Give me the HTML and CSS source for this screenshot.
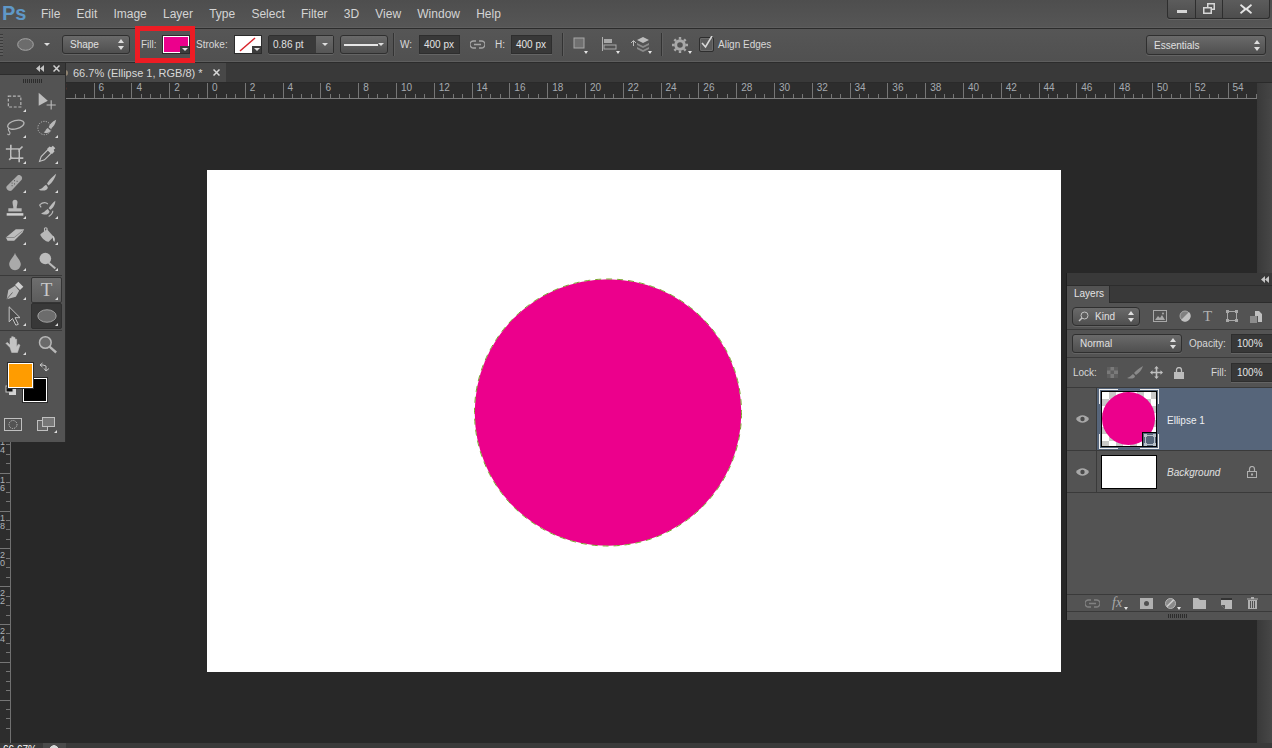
FILE: index.html
```html
<!DOCTYPE html>
<html lang="en">
<head>
<meta charset="utf-8">
<title>Photoshop</title>
<link rel="stylesheet" href="styles.css">
</head>
<body>
<div class="app">
  <header class="menubar">
    <div class="logo">Ps</div>
    <nav class="menu">
      <span>File</span><span>Edit</span><span>Image</span><span>Layer</span><span>Type</span><span>Select</span><span>Filter</span><span>3D</span><span>View</span><span>Window</span><span>Help</span>
    </nav>
    <div class="winctl">
      <div class="wbtn wmin"><i></i></div>
      <div class="wbtn wres"><svg width="14" height="12" viewBox="0 0 14 12"><path d="M5 0h8v7h-3v4H1V4h4zM6.500 1.500V4H10v1.500h1.500v-4zM2.500 5.500v4h6v-4z" fill="#d6d6d6" fill-rule="evenodd"/></svg></div>
      <div class="wbtn wclose"><svg width="12" height="10" viewBox="0 0 12 10"><path d="M1 0l5 4 5-4 1 1.500L8 5l4 3.500L11 10 6 6l-5 4-1-1.500L4 5 0 1.500z" fill="#e4e4e4"/></svg></div>
    </div>
  </header>

  <section class="options">
    <div class="opt-grip"></div>
    <svg class="o-ellipse" width="17" height="13" viewBox="0 0 17 13"><ellipse cx="8.500" cy="6.500" rx="7.800" ry="5.800" fill="#6c6c6c" stroke="#a8a8a8"/></svg>
    <i class="caret o-caret"></i>
    <div class="select o-shape"><span>Shape</span><i class="updown"></i></div>
    <div class="fillgroup">
      <span class="lbl l-fill">Fill:</span>
      <div class="swatch"><i class="swatch-corner"></i></div>
    </div>
    <span class="lbl o-stroke">Stroke:</span>
    <div class="swatch swatch-stroke">
      <svg width="26" height="17" viewBox="0 0 26 17"><path d="M5 15L20 2" stroke="#d8232a" stroke-width="1.500"/></svg>
      <i class="swatch-corner"></i>
    </div>
    <div class="combo o-pt"><span class="combo-val">0.86 pt</span><span class="combo-btn"><i class="caret"></i></span></div>
    <div class="select o-line"><b class="strokeline"></b><i class="caret"></i></div>
    <i class="vsep o-sep1"></i>
    <span class="lbl o-w">W:</span>
    <span class="field o-wv">400 px</span>
    <svg class="o-link" width="15" height="9" viewBox="0 0 15 9"><path d="M6 1H3.500a3.500 3.500 0 000 7H6M9 1h2.500a3.500 3.500 0 010 7H9M4 4.500h7" fill="none" stroke="#a6a6a6" stroke-width="1.300"/></svg>
    <span class="lbl o-h">H:</span>
    <span class="field o-hv">400 px</span>
    <i class="vsep o-sep2"></i>
    <div class="o-ic o-i1"><svg width="12" height="18" viewBox="0 0 12 18"><rect x="1" y="2" width="10" height="10" fill="#707070" stroke="#a8a8a8"/></svg><i class="tri"></i></div>
    <div class="o-ic o-i2"><svg width="17" height="18" viewBox="0 0 17 18"><path d="M1.500 1v14" stroke="#b0b0b0"/><rect x="3" y="3" width="8" height="4" fill="#a8a8a8"/><rect x="3" y="9" width="12" height="4" fill="none" stroke="#a8a8a8"/></svg><i class="tri"></i></div>
    <div class="o-ic o-i3"><svg width="20" height="18" viewBox="0 0 20 18"><path d="M1 7l2.500-2.500L6 7M3.500 5v5" fill="none" stroke="#bcbcbc"/><path d="M13 1l6 3-6 3-6-3z" fill="#bcbcbc"/><path d="M7 7l6 3 6-3v2l-6 3-6-3zM7 11l6 3 6-3v2l-6 3-6-3z" fill="#8a8a8a"/></svg><i class="tri"></i></div>
    <i class="vsep o-sep3"></i>
    <div class="o-ic o-gear"><svg width="16" height="16" viewBox="0 0 16 16"><circle cx="8" cy="8" r="4.300" fill="none" stroke="#a8a8a8" stroke-width="3"/><path d="M8 0v16M0 8h16M2.300 2.300l11.400 11.400M13.700 2.300L2.300 13.700" stroke="#a8a8a8" stroke-width="2.400" stroke-dasharray="2.600 10.800 2.600"/></svg><i class="tri"></i></div>
    <div class="check"><svg width="16" height="16" viewBox="0 0 16 16"><path d="M3 7l3.500 4L13 0" fill="none" stroke="#d8d8d8" stroke-width="1.600"/></svg></div>
    <span class="lbl o-align">Align Edges</span>
    <div class="select o-ess"><span>Essentials</span><i class="updown"></i></div>
  </section>

  <section class="tabbar">
    <div class="doctab"><span>66.7% (Ellipse 1, RGB/8) *</span><svg class="tabx" width="7" height="7" viewBox="0 0 7 7"><path d="M.5.5l6 6M6.500.5l-6 6" stroke="#d8d8d8" stroke-width="1.500"/></svg></div>
  </section>

  <section class="hruler">
    <div class="rticks">
      <span>8</span><span>6</span><span>4</span><span>2</span><span>0</span><span>2</span><span>4</span><span>6</span><span>8</span><span>10</span><span>12</span><span>14</span><span>16</span><span>18</span><span>20</span><span>22</span><span>24</span><span>26</span><span>28</span><span>30</span><span>32</span><span>34</span><span>36</span><span>38</span><span>40</span><span>42</span><span>44</span><span>46</span><span>48</span><span>50</span><span>52</span><span>54</span>
    </div>
    <div class="rcorner"></div>
  </section>

  <main class="work">
    <div class="vruler">
      <span>1<br>4</span><span>1<br>6</span><span>1<br>8</span><span>2<br>0</span><span>2<br>2</span><span>2<br>4</span><span></span><span></span>
    </div>
    <div class="stage">
      <div class="doc">
        <svg class="circle" width="268" height="269" viewBox="0 0 268 269"><circle cx="134" cy="134.500" r="133.300" fill="#ec008c"/><circle cx="134" cy="134.500" r="133.500" fill="none" stroke="#7aa52c" stroke-width="1" stroke-dasharray="6 5"/></svg>
      </div>
    </div>
    <div class="vscroll"></div>
  </main>

  <footer class="status"><span class="zoomv">66.67%</span><i class="status-cell"></i></footer>

  <aside class="toolbox">
    <div class="tb-head"><svg class="dbl" width="8" height="7" viewBox="0 0 8 7"><path d="M4 0v7L0 3.500zM8 0v7L4 3.500z" fill="#c4c4c4"/></svg><svg width="7" height="7" viewBox="0 0 7 7"><path d="M.5.500l6 6M6.500.500l-6 6" stroke="#d0d0d0" stroke-width="1.500"/></svg></div>
    <div class="grip"></div>
    <div class="tgroup">
      <div class="tool tri-on"><svg viewBox="0 0 24 24"><rect x="4" y="5" width="15" height="13" fill="none" stroke="#b8b8b8" stroke-width="1.400" stroke-dasharray="3.500 2"/></svg></div>
      <div class="tool"><svg viewBox="0 0 24 24"><path d="M2 1l11 9.500-11 6z" fill="#bdbdbd"/><path d="M17 10v11M11.500 15.500h11" stroke="#bdbdbd" stroke-width="1.300"/></svg></div>
      <div class="tool tri-on"><svg viewBox="0 0 24 24"><ellipse cx="13" cy="8" rx="10" ry="5" fill="none" stroke="#b5b5b5" stroke-width="1.600" transform="rotate(-15 13 8)"/><path d="M5 12c-3 3 1 4 1 6s-2 3-3 1" fill="none" stroke="#b5b5b5" stroke-width="1.300"/></svg></div>
      <div class="tool tri-on"><svg viewBox="0 0 24 24"><circle cx="9" cy="12" r="8" fill="none" stroke="#c4c4c4" stroke-dasharray="1.500 1.500"/><path d="M23 2c-5 2-8 6-9 9l2 2c4-2 6-6 7-11zM13 12c-3 1-2 4-5 5 3 2 8 1 8-2z" fill="#b8b8b8"/></svg></div>
      <div class="tool tri-on"><svg viewBox="0 0 24 24"><path d="M7 1v16h15M1 6h16v16M5 19L21 3" fill="none" stroke="#bdbdbd" stroke-width="2"/><rect x="8" y="7" width="8" height="9" fill="#5c5c5c"/></svg></div>
      <div class="tool tri-on"><svg viewBox="0 0 24 24"><path d="M3 21l2-6 8-8 4 4-8 8z" fill="#535353" stroke="#c4c4c4" stroke-width="1.300"/><path d="M12 6l3-3 2 1 2-2 3 3-2 2 1 2-3 3z" fill="#c0c0c0"/></svg></div>
    </div>
    <div class="tgroup">
      <div class="tool tri-on"><svg viewBox="0 0 24 24"><path d="M2 16L15 3c3-2 7 2 5 5L8 21c-3 2-8-2-6-5z" fill="#aaa"/><path d="M8 12h1M11 9h1M11 13h1M14 10h1M8 15h1" stroke="#555" stroke-width="1.500"/></svg></div>
      <div class="tool tri-on"><svg viewBox="0 0 24 24"><path d="M23 1c-4 3-9 8-11 12l2 2c4-3 8-9 9-14zM11 14c-3 1-3 4-9 6 5 2 11 1 11-3z" fill="#bbb"/></svg></div>
      <div class="tool tri-on"><svg viewBox="0 0 24 24"><path d="M9 4a3 3 0 016 0c0 3-1 4-1 7h6v4H4v-4h6c0-3-1-4-1-7z" fill="#b8b8b8"/><path d="M2 17h20v3H2z" fill="#d0d0d0"/></svg></div>
      <div class="tool tri-on"><svg viewBox="0 0 24 24"><path d="M22 2c-3 2-6 6-8 9l2 2c3-2 6-6 6-11zM13 12c-3 1-3 4-8 5 3 3 10 2 10-2z" fill="#bbb"/><path d="M3 7c4-3 8-3 10-1M3 7l2 3M3 7l3-2M19 14c0 3-2 5-5 7" fill="none" stroke="#bbb" stroke-width="1.300"/></svg></div>
      <div class="tool tri-on"><svg viewBox="0 0 24 24"><path d="M1 15L13 5h10l-2 4-10 10H3z" fill="#bdbdbd"/><path d="M1 15h10l10-8" fill="none" stroke="#808080"/></svg></div>
      <div class="tool tri-on"><svg viewBox="0 0 24 24"><path d="M4 11l8-6 8 9-6 6c-3 1-10-6-10-9z" fill="#b8b8b8"/><path d="M9 8V4a2 2 0 013 0v6" fill="none" stroke="#b8b8b8" stroke-width="1.300"/><path d="M19 13c2 1 3 4 2 7-2 0-2-4-2-7z" fill="#ccc"/></svg></div>
      <div class="tool tri-on"><svg viewBox="0 0 24 24"><path d="M12 2c1 5 7 9 7 14a7 7 0 01-14 0c0-5 6-9 7-14z" fill="#aaa"/></svg></div>
      <div class="tool tri-on"><svg viewBox="0 0 24 24"><circle cx="10" cy="9" r="7" fill="#bbb"/><path d="M14 14l8 7" stroke="#bbb" stroke-width="2.500"/></svg></div>
    </div>
    <div class="tgroup">
      <div class="tool tri-on"><svg viewBox="0 0 24 24"><path d="M2 23l2-11 8-5 5 6-4 7z" fill="#bbb"/><path d="M2 23l7-8" stroke="#555"/><path d="M12 6l4-4 6 6-4 4z" fill="#d0d0d0"/></svg></div>
      <div class="tool tool-on tri-on"><span class="t-glyph">T</span></div>
      <div class="tool tri-on"><svg viewBox="0 0 24 24"><path d="M5 1v18l4-4 4 8 3-1-4-8h6z" fill="#4a4a4a" stroke="#c4c4c4" stroke-width="1.200"/></svg></div>
      <div class="tool tool-dark tri-on"><svg viewBox="0 0 24 24"><ellipse cx="12" cy="12" rx="11" ry="7.500" fill="#6c6c6c" stroke="#b0b0b0"/></svg></div>
    </div>
    <div class="tgroup tgroup-last">
      <div class="tool tri-on"><svg viewBox="0 0 24 24"><path d="M6 15L1 10l2-1 3 3V4h2v6-8h2v8-7h2v7-5h2v9l2-3 2 1-3 9H8z" fill="#c4c4c4" stroke="#c4c4c4" stroke-width=".6"/></svg></div>
      <div class="tool"><svg viewBox="0 0 24 24"><circle cx="10" cy="9" r="7" fill="#6a6a6a" stroke="#b8b8b8" stroke-width="1.800"/><path d="M15 14l8 7" stroke="#b8b8b8" stroke-width="2.800"/></svg></div>
    </div>
    <div class="colors">
      <div class="cbg"></div>
      <div class="cfg"></div>
      <svg class="cswap" width="12" height="12" viewBox="0 0 12 12"><path d="M1 3h3l3 1v5M1 3l2.500-2M1 3l2.500 2M7 9l-2-2.500M7 9l3-2.500" fill="none" stroke="#c8c8c8"/></svg>
      <svg class="cdef" width="12" height="11" viewBox="0 0 12 11"><rect x="4" y="4" width="7" height="6" fill="#d4d4d4"/><rect x="1" y="1" width="7" height="6" fill="#111" stroke="#c8c8c8"/></svg>
    </div>
    <div class="modes">
      <svg width="18" height="14" viewBox="0 0 18 14"><rect x=".5" y=".5" width="17" height="12" fill="none" stroke="#c0c0c0"/><circle cx="9" cy="6.500" r="4" fill="none" stroke="#c8c8c8" stroke-dasharray="1 1"/></svg>
      <div class="mode2"><svg width="18" height="14" viewBox="0 0 18 14"><rect x=".5" y="3.500" width="10" height="10" fill="#666" stroke="#c0c0c0"/><rect x="5.500" y=".5" width="12" height="9" fill="#777" stroke="#c0c0c0"/></svg></div>
    </div>
  </aside>

  <aside class="layers">
    <div class="lp-head"><svg width="8" height="7" viewBox="0 0 8 7"><path d="M4 0v7L0 3.500zM8 0v7L4 3.500z" fill="#c4c4c4"/></svg></div>
    <div class="lp-tabs"><div class="lp-tab">Layers</div></div>
    <div class="lp-row lp-filter">
      <div class="select s-kind"><svg width="11" height="11" viewBox="0 0 11 11"><circle cx="6.500" cy="4.500" r="3.500" fill="none" stroke="#c4c4c4"/><path d="M4 7L1 10" stroke="#c4c4c4" stroke-width="1.400"/></svg><span>Kind</span><i class="updown"></i></div>
      <svg class="f-ic" width="14" height="12" viewBox="0 0 14 12"><rect x=".5" y=".5" width="13" height="11" fill="none" stroke="#a8a8a8"/><path d="M2 10l3-4 2 2 2-3 3 5z" fill="#a8a8a8"/><circle cx="10" cy="3.500" r="1" fill="#a8a8a8"/></svg>
      <svg class="f-ic" width="12" height="12" viewBox="0 0 12 12"><circle cx="6" cy="6" r="5" fill="#808080" stroke="#a8a8a8"/><path d="M10 2L2 10a5 5 0 008-8z" fill="#c0c0c0"/></svg>
      <span class="f-t">T</span>
      <svg class="f-ic" width="12" height="12" viewBox="0 0 12 12"><rect x="1.500" y="1.500" width="9" height="9" fill="none" stroke="#a8a8a8"/><path d="M0 0h3v3H0zM9 0h3v3H9zM0 9h3v3H0zM9 9h3v3H9z" fill="#a8a8a8"/></svg>
      <svg class="f-ic" width="12" height="13" viewBox="0 0 12 13"><path d="M5 1h4l3 3v8H8V6H5z" fill="#c0c0c0"/><rect y="6" width="7" height="7" fill="#8c8c8c"/></svg>
    </div>
    <div class="lp-row lp-blend">
      <div class="select s-normal"><span>Normal</span><i class="updown"></i></div>
      <span class="lbl op-lbl">Opacity:</span><span class="field pct">100%</span>
    </div>
    <div class="lp-row lp-lock">
      <span class="lbl">Lock:</span>
      <svg class="lk1" width="11" height="11" viewBox="0 0 11 11"><rect width="11" height="11" fill="#7a7a7a"/><path d="M0 0h3.500v3.500H0zM7 0h4v3.500H7zM3.500 3.500H7V7H3.500zM0 7h3.500v4H0zM7 7h4v4H7z" fill="#5f5f5f"/></svg>
      <svg class="lk2" width="16" height="13" viewBox="0 0 16 13"><path d="M16 0C12 2 9 5 7 7l2 2c3-2 6-5 7-9zM6 8c-2 1-2 3-6 4 3 1 8 1 8-2z" fill="#8a8a8a"/></svg>
      <svg class="lk3" width="13" height="13" viewBox="0 0 13 13"><path d="M6.500 0l2.300 2.500H7.300v3.200h3.200V4.200L13 6.500l-2.500 2.300V7.300H7.300v3.200h1.500L6.500 13l-2.300-2.500h1.500V7.300H2.500v1.500L0 6.500l2.500-2.300v1.500h3.200V2.500H4.200z" fill="#c0c0c0"/></svg>
      <svg class="lk4" width="10" height="12" viewBox="0 0 10 12"><path d="M2.500 5V3a2.500 2.500 0 015 0v2" fill="none" stroke="#c0c0c0" stroke-width="1.300"/><rect y="5" width="10" height="7" fill="#bcbcbc"/></svg>
      <span class="lbl lk-fill">Fill:</span><span class="field pct">100%</span>
    </div>
    <div class="layer layer-sel">
      <div class="eye"><svg width="13" height="8" viewBox="0 0 13 8"><path d="M0 4c3-5 10-5 13 0-3 5-10 5-13 0z" fill="#a8a8a8"/><circle cx="6.500" cy="4" r="2.200" fill="#4a4a4a"/></svg></div>
      <div class="thumb thumb-shape">
        <div class="thumb-dot"></div>
        <div class="thumb-badge"><svg width="12" height="12" viewBox="0 0 12 12"><rect x="1.500" y="1.500" width="9" height="9" fill="none" stroke="#b8c0c8"/><path d="M0 0h3v3H0zM9 0h3v3H9zM0 9h3v3H0zM9 9h3v3H9z" fill="#b8c0c8"/></svg></div>
      </div>
      <span class="lname">Ellipse 1</span>
    </div>
    <div class="layer layer-bg">
      <div class="eye"><svg width="13" height="8" viewBox="0 0 13 8"><path d="M0 4c3-5 10-5 13 0-3 5-10 5-13 0z" fill="#a8a8a8"/><circle cx="6.500" cy="4" r="2.200" fill="#4a4a4a"/></svg></div>
      <div class="thumb thumb-bg"></div>
      <span class="lname lname-bg">Background</span>
      <svg class="lname-lock" width="10" height="12" viewBox="0 0 10 12"><path d="M2.500 5V3a2.500 2.500 0 015 0v2" fill="none" stroke="#b0b0b0" stroke-width="1.200"/><rect x=".5" y="5.500" width="9" height="6" fill="none" stroke="#b0b0b0"/><rect x="4" y="7.500" width="2" height="2" fill="#b0b0b0"/></svg>
    </div>
    <div class="lp-space"></div>
    <div class="lp-foot">
      <svg width="15" height="9" viewBox="0 0 15 9"><path d="M6 1H3.500a3.500 3.500 0 000 7H6M9 1h2.500a3.500 3.500 0 010 7H9M4 4.500h7" fill="none" stroke="#828282" stroke-width="1.300"/></svg>
      <span class="fx">fx<i class="tri"></i></span>
      <svg width="13" height="11" viewBox="0 0 13 11"><rect width="13" height="11" fill="#b0b0b0"/><circle cx="6.500" cy="5.500" r="2.500" fill="#505050"/></svg>
      <span class="fadj"><svg width="11" height="11" viewBox="0 0 11 11"><circle cx="5.500" cy="5.500" r="5" fill="#8a8a8a" stroke="#b8b8b8"/><path d="M8.500 2L2 8.500" stroke="#d0d0d0" stroke-width="1.600"/></svg><i class="tri"></i></span>
      <svg width="13" height="11" viewBox="0 0 13 11"><path d="M0 0h5l2 2h6v9H0z" fill="#b8b8b8"/></svg>
      <svg width="11" height="11" viewBox="0 0 11 11"><path d="M0 0h11v11H4L0 7z" fill="#b8b8b8"/><path d="M0 0h11v2H0z" fill="#333"/><path d="M0 7h4v4z" fill="#555"/></svg>
      <svg width="11" height="12" viewBox="0 0 11 12"><path d="M1 3h9v9H1zM0 1.500h11v1H0zM4 0h3v1.500H4z" fill="#b0b0b0"/><path d="M3.500 4v7M5.500 4v7M7.500 4v7" stroke="#505050"/></svg>
    </div>
    <div class="lp-end"><div class="grip"></div></div>
  </aside>
</div>
</body>
</html>
```
FILE: styles.css
```css
*, *::before, *::after { box-sizing: border-box; }
html, body { margin: 0; padding: 0; }
body { width: 1272px; height: 748px; overflow: hidden; background: #282828; font-family: "Liberation Sans", Arial, sans-serif; font-size: 10px; color: #d2d2d2; }
i, b { display: block; font-style: normal; }
.app { position: relative; width: 1272px; height: 748px; display: flex; flex-direction: column; overflow: hidden; }

/* menu */
.menubar { height: 29px; flex: none; display: flex; background: linear-gradient(#4e4e4e, #565656); border-bottom: 1px solid #2c2c2c; box-shadow: inset 0 -1px 0 #5e5e5e; }
.logo { width: 41px; padding-left: 2px; font-size: 20px; line-height: 27px; font-weight: 700; color: #5f98c8; }
.menu { display: flex; gap: 16.200px; height: 28px; align-items: center; font-size: 12px; color: #d4d4d4; }
.winctl { margin-left: auto; margin-right: 2px; display: flex; height: 19px; border: 1px solid #2e2e2e; border-top: 0; border-radius: 0 0 3px 3px; background: linear-gradient(#5c5c5c, #4d4d4d); box-shadow: 0 1px 0 #666; }
.wbtn { display: flex; align-items: center; justify-content: center; border-right: 1px solid #2e2e2e; }
.wmin { width: 28px; } .wres { width: 27px; } .wclose { width: 46px; border-right: 0; }
.wmin i { width: 10px; height: 3px; background: #d6d6d6; margin-top: 4px; }

/* options */
.options { height: 34px; flex: none; display: flex; align-items: center; position: relative; background: linear-gradient(#565656, #505050); border-bottom: 1px solid #2c2c2c; box-shadow: inset 0 -1px 0 #5e5e5e; padding-bottom: 2px; }
.opt-grip { width: 3px; height: 22px; background: repeating-linear-gradient(#3a3a3a 0 1px, #5c5c5c 1px 3px); }
.lbl { font-size: 10px; color: #d8d8d8; white-space: nowrap; }
.select { height: 19px; display: flex; align-items: center; justify-content: space-between; border: 1px solid #2f2f2f; border-radius: 3px; background: linear-gradient(#6a6a6a, #4f4f4f); box-shadow: 0 1px 0 #646464; padding: 0 4px 0 7px; font-size: 10px; color: #e0e0e0; }
.updown { position: relative; width: 7px; height: 11px; }
.updown::before, .updown::after { content: ""; position: absolute; left: 0; border-left: 3.500px solid transparent; border-right: 3.500px solid transparent; }
.updown::before { top: 0; border-bottom: 4px solid #dedede; }
.updown::after { bottom: 0; border-top: 4px solid #dedede; }
.caret { width: 0; height: 0; border-left: 3px solid transparent; border-right: 3px solid transparent; border-top: 3px solid #dedede; }
.tri { position: absolute; right: 0; bottom: 0; width: 0; height: 0; border-left: 2.500px solid transparent; border-right: 2.500px solid transparent; border-top: 3px solid #e4e4e4; }
.o-ellipse { margin-left: 14px; }
.o-caret { margin-left: 10px; }
.o-shape { width: 68px; margin-left: 12px; }
.fillgroup { position: relative; display: flex; align-items: center; margin-left: 11px; width: 48px; height: 17px; }
.l-fill { width: 22px; }
.fillgroup::after { content: ""; position: absolute; left: -6px; top: -10px; width: 60px; height: 37px; border: 5px solid #ed1c24; }
.swatch { position: relative; width: 26px; height: 17px; background: #ec008c; border: 1px solid #fff; outline: 1px solid #2c2c2c; flex: none; }
.swatch-corner { position: absolute; right: -1px; bottom: -1px; width: 9px; height: 7px; background: #3c3c3c; }
.swatch-corner::after { content: ""; position: absolute; left: 2px; top: 2px; border-left: 3px solid transparent; border-right: 3px solid transparent; border-top: 3px solid #e4e4e4; }
.o-stroke { margin-left: 7px; width: 33px; }
.swatch-stroke { margin-left: 6px; background: #fff; }
.swatch-stroke svg { position: absolute; left: -1px; top: -1px; }
.combo { display: flex; height: 19px; width: 66px; margin-left: 7px; border: 1px solid #2f2f2f; border-radius: 2px; box-shadow: 0 1px 0 #646464; }
.combo-val { width: 47px; background: #3a3a3a; padding-left: 4px; line-height: 17px; font-size: 10px; color: #e0e0e0; }
.combo-btn { flex: 1; background: linear-gradient(#6a6a6a, #565656); display: flex; align-items: center; justify-content: center; }
.o-line { width: 48px; margin-left: 6px; padding: 0 3px; }
.strokeline { width: 35px; height: 2px; background: #e6e6e6; }
.vsep { width: 1px; height: 23px; background: #333; box-shadow: 1px 0 0 #5e5e5e; }
.o-sep1 { margin-left: 5px; }
.o-w { margin-left: 6px; width: 19px; }
.field { display: block; height: 19px; background: #383838; border: 1px solid #2e2e2e; box-shadow: 0 1px 0 #646464; font-size: 10px; line-height: 17px; padding-left: 4px; color: #e4e4e4; white-space: nowrap; }
.o-wv { width: 41px; }
.o-link { margin-left: 10px; }
.o-h { margin-left: 10px; width: 16px; }
.o-hv { width: 41px; }
.o-sep2 { margin-left: 10px; }
.o-ic { position: relative; height: 19px; display: flex; align-items: center; flex: none; }
.o-i1 { margin-left: 10px; width: 15px; }
.o-i2 { margin-left: 13px; width: 19px; }
.o-i3 { margin-left: 10px; width: 22px; }
.o-sep3 { margin-left: 9px; }
.o-gear { margin-left: 10px; width: 20px; }
.check { width: 15px; height: 15px; margin-left: 7px; border: 1px solid #2e2e2e; border-radius: 2px; background: #5a5a5a; box-shadow: 0 0 0 1px #6a6a6a inset; position: relative; }
.check svg { position: absolute; left: -1px; top: -2px; }
.o-align { margin-left: 4px; }
.o-ess { width: 120px; margin-left: auto; margin-right: 6px; height: 20px; margin-top: 1px; padding-left: 7px; }

/* tabs */
.tabbar { height: 20px; flex: none; background: #393939; display: flex; padding-left: 65px; border-bottom: 1px solid #2a2a2a; }
.doctab { position: relative; width: 161px; height: 19px; background: #484848; display: flex; align-items: center; padding-left: 8px; font-size: 11px; color: #d8d8d8; white-space: nowrap; }
.doctab::before { content: ""; position: absolute; left: 0; top: 7px; width: 3px; height: 6px; border-radius: 0 3px 3px 0; background: #8e8270; }
.tabx { margin-left: auto; margin-right: 6px; flex: none; }

/* rulers */
.hruler { height: 16px; flex: none; display: flex; background: #2d2d2d; }
.rticks { width: 1257px; flex: none; display: flex; padding-left: 55.800px; border-bottom: 1px solid #7c7c7c; overflow: hidden; }
.rticks span { flex: none; width: 37.800px; height: 15px; padding-left: 4px; border-left: 1px solid #767676; font-size: 10px; line-height: 10px; color: #a6abb0; background:
  linear-gradient(#767676, #767676) 8.450px 11px / 1px 4px no-repeat,
  linear-gradient(#767676, #767676) 17.900px 11px / 1px 4px no-repeat,
  linear-gradient(#767676, #767676) 27.350px 11px / 1px 4px no-repeat; }
.rcorner { flex: 1; background: linear-gradient(90deg, #3a3a3a, #454545); }
.work { flex: 1; min-height: 0; display: flex; }
.vruler { width: 11px; flex: none; background: #2d2d2d; border-right: 1px solid #707070; padding-top: 336px; overflow: hidden; }
.vruler span { display: block; height: 37.800px; padding-top: 2px; border-top: 1px solid #767676; font-size: 9px; line-height: 8px; color: #aeb2b6; background:
  linear-gradient(#767676, #767676) 6px 8.450px / 4px 1px no-repeat,
  linear-gradient(#767676, #767676) 6px 17.900px / 4px 1px no-repeat,
  linear-gradient(#767676, #767676) 6px 27.350px / 4px 1px no-repeat; }
.stage { flex: 1; background: #282828; padding: 71px 0 0 196px; }
.doc { position: relative; width: 854px; height: 502px; background: #fff; }
.circle { position: absolute; left: 267px; top: 108px; }
.vscroll { width: 15px; flex: none; background: linear-gradient(90deg, #393939, #474747); }
.status { height: 5px; flex: none; background: #3a3a3a; display: flex; overflow: hidden; }
.zoomv { color: #fff; font-size: 10px; line-height: 12px; margin-left: 3px; width: 40px; flex: none; margin-top: 1px; }
.status-cell { width: 23px; height: 5px; background: radial-gradient(circle at 11px 7px, #d8d8d8 0 4.500px, #4a4a4a 5px); }

/* toolbox */
.toolbox { position: absolute; left: 0; top: 63px; width: 65px; height: 379px; background: #535353; box-shadow: 1px 0 0 #2c2c2c; }
.tb-head { height: 12px; background: #393939; border-bottom: 1px solid #2c2c2c; display: flex; align-items: center; justify-content: flex-end; padding-right: 5px; gap: 9px; }
.grip { width: 20px; height: 4px; margin: 4px auto 0; background: repeating-linear-gradient(90deg, #2c2c2c 0 1px, transparent 1px 2px); }
.tgroup { display: grid; grid-template-columns: 32px 32px; grid-auto-rows: 26px; padding-bottom: 1px; margin: 0 3px 1px -1px; border-bottom: 1px solid #3a3a3a; }
.toolbox > .grip + .tgroup { margin-top: 6px; }
.tgroup-last { border-bottom: 0; margin-bottom: 0; padding-bottom: 0; }
.tool { position: relative; width: 31px; height: 26px; display: flex; align-items: center; justify-content: center; border-radius: 2px; border: 1px solid transparent; }
.tool svg { width: 20px; height: 20px; display: block; }
.tri-on::after { content: ""; position: absolute; right: 3px; bottom: 2px; width: 0; height: 0; border-left: 3px solid transparent; border-bottom: 3px solid #dcdcdc; }
.tool-on { background: linear-gradient(#6e6e6e, #5c5c5c); border-color: #343434; }
.tool-dark { background: #383838; border-color: #303030; }
.t-glyph { font-family: "Liberation Serif", serif; font-size: 19px; line-height: 20px; color: #c8c8c8; }
.colors { position: relative; height: 50px; }
.cfg { position: absolute; left: 8px; top: 5px; width: 25px; height: 25px; background: #ff9c00; border: 1px solid #fff; outline: 1px solid #2c2c2c; z-index: 1; }
.cbg { position: absolute; left: 23px; top: 20px; width: 24px; height: 24px; background: #000; border: 1px solid #fff; outline: 1px solid #2c2c2c; }
.cswap { position: absolute; left: 39px; top: 4px; }
.cdef { position: absolute; left: 5px; top: 27px; }
.modes { display: flex; justify-content: space-between; padding: 9px 8px 0 4px; align-items: center; }
.mode2 { position: relative; width: 20px; height: 16px; }
.mode2::after { content: ""; position: absolute; right: 0; bottom: 0; border-left: 3px solid transparent; border-bottom: 3px solid #dcdcdc; }

/* layers */
.layers { position: absolute; left: 1067px; top: 273px; width: 205px; height: 347px; background: #535353; display: flex; flex-direction: column; box-shadow: -1px 0 0 #1e1e1e; }
.lp-head { height: 12px; background: #393939; display: flex; justify-content: flex-end; align-items: center; padding-right: 3px; flex: none; }
.lp-tabs { height: 18px; flex: none; background: #393939; border-bottom: 1px solid #2c2c2c; border-top: 1px solid #2c2c2c; }
.lp-tab { width: 43px; height: 17px; background: #535353; padding-left: 7px; line-height: 16px; font-size: 10px; color: #e4e4e4; border-right: 1px solid #2c2c2c; }
.lp-row { display: flex; align-items: center; flex: none; background: #535353; border-bottom: 1px solid #3a3a3a; }
.lp-filter { height: 27px; padding-left: 5px; }
.s-kind { width: 68px; padding: 0 4px 0 5px; justify-content: flex-start; height: 19px; border-radius: 4px; }
.s-kind span { margin-left: 6px; }
.s-kind .updown { margin-left: auto; }
.f-ic { margin-left: 12px; }
.s-kind + .f-ic { margin-left: 13px; }
.f-t { font-family: "Liberation Serif", serif; font-size: 15px; line-height: 14px; color: #b0b0b0; margin-left: 12px; width: 11px; }
.f-t + .f-ic { margin-left: 12px; }
.lp-blend { height: 28px; padding-left: 5px; }
.s-normal { width: 110px; padding-left: 7px; }
.op-lbl { margin-left: auto; width: 37px; }
.pct { margin-left: 5px; width: 41px; padding-left: 5px; border-right: 0; flex: none; }
.lp-lock { height: 30px; padding-left: 6px; }
.lk1 { margin-left: 10px; }
.lk2 { margin-left: 9px; }
.lk3 { margin-left: 7px; }
.lk4 { margin-left: 11px; }
.lk-fill { margin-left: auto; width: 15px; }
.layer { height: 42px; display: flex; align-items: center; flex: none; background: #535353; border-bottom: 1px solid #3a3a3a; position: relative; }
.layer-sel { height: 63px; background: #56657a; }
.eye { align-self: stretch; width: 30px; flex: none; background: #535353; border-right: 1px solid #3a3a3a; display: flex; align-items: center; justify-content: center; padding-left: 1px; }
.thumb { position: relative; width: 56px; height: 34px; margin-left: 4px; flex: none; background: #fff; border: 1px solid #000; }
.thumb-shape { height: 56px; background-color: #fff; background-image: linear-gradient(45deg, #c8c8c8 25%, transparent 25% 75%, #c8c8c8 75%), linear-gradient(45deg, #c8c8c8 25%, transparent 25% 75%, #c8c8c8 75%); background-size: 14px 14px; background-position: 0 0, 7px 7px; }
.thumb-shape::before { content: ""; position: absolute; inset: -3px -3px -3px -3px; background:
  linear-gradient(#eee, #eee) left top / 19px 1px no-repeat,
  linear-gradient(#eee, #eee) right top / 19px 1px no-repeat,
  linear-gradient(#eee, #eee) left bottom / 19px 1px no-repeat,
  linear-gradient(#eee, #eee) right bottom / 19px 1px no-repeat,
  linear-gradient(#eee, #eee) left top / 1px 15px no-repeat,
  linear-gradient(#eee, #eee) right top / 1px 15px no-repeat,
  linear-gradient(#eee, #eee) left bottom / 1px 15px no-repeat,
  linear-gradient(#eee, #eee) right bottom / 1px 15px no-repeat; }
.thumb-dot { position: absolute; left: 0; top: 0; width: 53px; height: 53px; border-radius: 50%; background: #ec008c; }
.thumb-badge { position: absolute; right: -1px; bottom: -1px; width: 15px; height: 15px; background: #56657a; border: 1px solid #000; display: flex; align-items: center; justify-content: center; }
.lname { margin: 2px 0 0 10px; font-size: 10px; color: #eef0f2; white-space: nowrap; }
.lname-bg { font-style: italic; color: #e0e0e0; }
.lname-lock { margin-left: auto; margin-right: 15px; }
.lp-space { flex: 1; background: #535353; }
.lp-foot { height: 18px; flex: none; background: #535353; border-top: 1px solid #3a3a3a; border-bottom: 1px solid #3a3a3a; display: grid; grid-template-columns: repeat(7, 26.700px); align-items: center; justify-items: center; padding-left: 12.500px; }
.fx { position: relative; font-family: "Liberation Serif", serif; font-style: italic; font-size: 14px; line-height: 14px; color: #a8a8a8; width: 17px; padding-left: 1px; }
.fadj { position: relative; width: 17px; height: 14px; display: flex; align-items: center; padding-left: 1px; }
.lp-end { height: 8px; flex: none; background: #535353; }
.lp-end .grip { margin-top: 2px; margin-left: 101px; }
```
